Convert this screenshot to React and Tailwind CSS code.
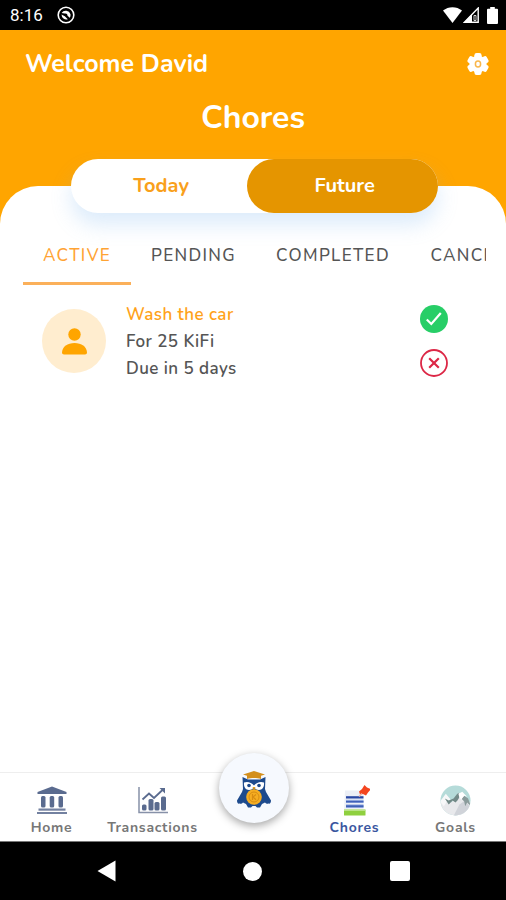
import { useState } from 'react';

const TABS = [
  { label: 'ACTIVE', width: 'w-[108px]' },
  { label: 'PENDING', width: 'w-[125px]' },
  { label: 'COMPLETED', width: 'w-[154px]' },
  { label: 'CANCELLED', width: 'w-[152px]' },
];

// ─── Device chrome ───────────────────────────────────────────────────────────

function StatusBar() {
  return (
    <div className="flex h-[30px] shrink-0 items-center bg-black pr-2 pl-2.5 text-white">
      <span className="font-['Roboto',sans-serif] text-[17px] leading-5">8:16</span>
      <svg className="ml-3.5 size-[18px]" viewBox="0 0 18 18" fill="none" aria-hidden="true">
        <circle cx="9" cy="9" r="7.800" stroke="#fff" strokeWidth="1.600" />
        <path d="M4.600 7A5 5 0 0 1 13.500 8.200c.2 1.600-.2 2.700-.9 3.600L10.400 9.600c.2-1.600-1.200-2.600-2.600-2z" fill="#fff" />
        <path d="M4.500 8.500l3.300 1.700 3 3A4.900 4.900 0 0 1 4.500 8.500z" fill="#fff" />
      </svg>
      <div className="ml-auto flex items-center">
        <svg className="h-4 w-[19px]" viewBox="0 0 19 16" fill="#fff" aria-hidden="true">
          <path d="M0 3.600C5.400-1 13.600-1 19 3.600L9.500 16z" />
        </svg>
        <svg className="ml-px h-4 w-4" viewBox="0 0 16 16" aria-hidden="true">
          <path d="M15.200 1v14.200H1.400z" fill="none" stroke="#fff" strokeWidth="1.400" />
          <path d="M9 7v9H.4z" fill="#fff" />
          <path d="M11 8.500h2v5h-2z" fill="none" stroke="#fff" strokeWidth=".8" />
        </svg>
        <svg className="ml-2 h-[17px] w-[11px]" viewBox="0 0 11 17" fill="#fff" aria-hidden="true">
          <path d="M3.200 0h4.600v1.700H10a1 1 0 0 1 1 1V16a1 1 0 0 1-1 1H1a1 1 0 0 1-1-1V2.700a1 1 0 0 1 1-1h2.200z" />
        </svg>
      </div>
    </div>
  );
}

function SystemNav() {
  return (
    <div className="grid h-[59px] shrink-0 grid-cols-3 place-items-center border-t border-[#777] bg-black px-[33px]">
      <button type="button" aria-label="Back">
        <svg className="h-[22px] w-[19px]" viewBox="0 0 19 22" fill="#fff">
          <path d="M18.500.5v21L.5 11z" />
        </svg>
      </button>
      <button type="button" aria-label="Home screen" className="size-[19px] rounded-full bg-white" />
      <button type="button" aria-label="Recent apps" className="size-5 rounded-xs bg-white" />
    </div>
  );
}

// ─── Icons ───────────────────────────────────────────────────────────────────

function GearIcon() {
  return (
    <svg className="size-[22px]" viewBox="0 0 22 22" aria-hidden="true">
      <g fill="#fff">
        <circle cx="11" cy="11" r="8.600" />
        <rect x="7.400" y="0" width="7.200" height="22" rx="2.200" />
        <rect x="7.400" y="0" width="7.200" height="22" rx="2.200" transform="rotate(60 11 11)" />
        <rect x="7.400" y="0" width="7.200" height="22" rx="2.200" transform="rotate(120 11 11)" />
      </g>
      <ellipse cx="11" cy="11" rx="2.600" ry="3" fill="none" stroke="#f9b64a" strokeWidth="1.500" />
    </svg>
  );
}

function PersonIcon() {
  return (
    <svg className="h-[27px] w-[25px]" viewBox="0 0 25 27" fill="#ffa500" aria-hidden="true">
      <circle cx="12.500" cy="6.500" r="6.200" />
      <path d="M0 24.500C.4 18.500 5.500 15 12.500 15S24.600 18.500 25 24.500c0 1.300-.8 2-2 2H2c-1.200 0-2-.7-2-2z" />
    </svg>
  );
}

function BankIcon() {
  return (
    <svg className="size-[30px]" viewBox="0 0 30 30" fill="#5a6b8f" aria-hidden="true">
      <path d="M15 .5 29.500 6v2H.5V6z" />
      <rect x="4" y="10" width="4.500" height="11.500" rx="1.500" />
      <rect x="12.700" y="10" width="4.500" height="11.500" rx="1.500" />
      <rect x="21.500" y="10" width="4.500" height="11.500" rx="1.500" />
      <rect x="1.500" y="22.500" width="27" height="2.200" opacity=".85" />
      <rect x="0" y="26" width="30" height="2" opacity=".85" />
    </svg>
  );
}

function ChartIcon() {
  return (
    <svg className="size-[30px]" viewBox="0 0 30 30" fill="none" aria-hidden="true">
      <path d="M1 1v25.500h29" stroke="#8791a8" strokeWidth="1.500" />
      <path d="m4.500 13.500 6.500-6 5 4.500L25 3.500" stroke="#5a6b8f" strokeWidth="1.800" />
      <path d="M21.500 2h5.500v5.500z" fill="#5a6b8f" />
      <g fill="#5a6b8f">
        <rect x="4" y="18.500" width="4.500" height="6" rx="1.500" />
        <rect x="10.500" y="13" width="5" height="11.500" rx="1.500" />
        <rect x="16.500" y="16" width="5" height="8.500" rx="1.500" />
        <rect x="23" y="10.500" width="5" height="14" rx="1.500" />
      </g>
    </svg>
  );
}

function ChoresIcon() {
  return (
    <svg className="h-[31px] w-[30px]" viewBox="0 0 30 31" aria-hidden="true">
      <path d="M5 5.500h18.500V26H4z" fill="#eceff6" />
      <path d="M4 25h21.500v5a.5.500 0 0 1-.5.500H4.500A.5.500 0 0 1 4 30z" fill="#8fd03f" />
      <path d="M4 24h21.500v1.800H4z" fill="#c6e79c" />
      <path d="M6 14.700h17.500v3.300H6zM6 19.300h17.500v3.700H6z" fill="#a9bce8" />
      <path d="M6 11.200h17.500v2.300H6z" fill="#2947a4" />
      <path d="M6 15.700h17.500v1.800H6zM6 20.300h17.500v2H6z" fill="#3f60b8" />
      <path d="M26.500 0 29 2.500 33 4l-3 3.500-2 3-3-1.500-3 .5-1-3L24 4z" fill="#f4451f" transform="translate(-2 0)" />
      <path d="m22 8.500-3 3" stroke="#e9b4a9" strokeWidth="1.200" />
    </svg>
  );
}

function GoalsIcon() {
  return (
    <svg className="size-[31px]" viewBox="0 0 32 32" aria-hidden="true">
      <defs>
        <clipPath id="goals-disc">
          <circle cx="16" cy="16" r="15.500" />
        </clipPath>
      </defs>
      <g clipPath="url(#goals-disc)">
        <rect width="32" height="32" fill="#b5dbd9" />
        <path d="m0 19 6-8 6 7 7-10 7 4 6 7v13H8L0 22z" fill="#e8e9ec" />
        <path d="m14 32 6-12 6-4 6 8-10 8z" fill="#d0d3d9" />
        <path d="m0 17 6-8 5 6-4 2-3 5z" fill="#f7f8f9" />
        <path d="m5 14 4 2 5-2 3-4 2-2 2 3-3 5-2 2-3-2-4 4z" fill="#728a88" />
        <path d="m22 14 3-3 4 3 3 8-4-4-2 4-1-5z" fill="#8a9b9b" />
        <path d="m19 9 4-2 5 5-3-1-3 4-2-2z" fill="#fff" />
      </g>
    </svg>
  );
}

function OwlIcon() {
  return (
    <svg className="h-[37px] w-[34px]" viewBox="0 0 34 37" aria-hidden="true">
      <path d="M5.500 6 11 8.500h12L28.500 6 28 18l1 3 5 8.500c0 2.500-1 3.500-2.500 3-1.500.6-2.500.3-3.500-1l-3 1.500-2 3.500h-3l-1.500-1.500h-3L14 36.500h-3L9 33l-3-1.500c-1 1.300-2 1.600-3.500 1-1.500.5-2.500-.5-2.500-3L5 21l1-3z" fill="#1d4a8d" />
      <path d="M7 11.500c3.500-1.500 7.500 0 10 3 2.500-3 6.500-4.500 10-3 .5 4.500-1.500 7.500-5 7.500-2.200 0-4-1.200-5-3-1 1.800-2.800 3-5 3-3.500 0-5.500-3-5-7.500z" fill="#fff" />
      <circle cx="12" cy="14.500" r="1.800" fill="#1d4a8d" />
      <circle cx="22" cy="14.500" r="1.800" fill="#1d4a8d" />
      <path d="M15.500 16h3L17 19z" fill="#e9a01b" />
      <path d="M17 0 28 3.500l-4 1.300V8c-4-1.400-10-1.400-14 0V4.800L6 3.500z" fill="#d38f1d" />
      <circle cx="17" cy="26" r="7.800" fill="#f5ad22" />
      <circle cx="17" cy="26" r="5" fill="none" stroke="#d88d12" strokeWidth="1" />
      <path d="M15.500 23v6M19 23.500 16 26l3 2.800" fill="none" stroke="#d88d12" strokeWidth="1.200" />
    </svg>
  );
}

// ─── Screen parts ────────────────────────────────────────────────────────────

function DayToggle({ value, onChange }) {
  return (
    <div className="relative z-10 mr-[68px] ml-[71px] flex h-[54px] rounded-full bg-white text-xl font-bold shadow-[0_12px_20px_rgba(120,180,240,0.25)]">
      <button
        type="button"
        onClick={() => onChange('today')}
        className={`flex-1 rounded-full pl-1 ${value === 'today' ? 'bg-[#e59500] text-white' : 'text-[#f9a01b]'}`}
      >
        Today
      </button>
      <button
        type="button"
        onClick={() => onChange('future')}
        className={`w-[52%] rounded-full pl-1 ${value === 'future' ? 'bg-[#e59500] text-white' : 'text-[#f9a01b]'}`}
      >
        Future
      </button>
    </div>
  );
}

function ChoreRow({ title, reward, due }) {
  return (
    <li className="flex pr-[58px] pl-[42px]">
      <div className="mt-2 flex size-16 shrink-0 items-center justify-center rounded-full bg-[#ffedcf]">
        <PersonIcon />
      </div>
      <div className="ml-5 flex-1 text-[17px] leading-[27px] font-semibold tracking-wide text-[#555]">
        <h2 className="text-[#ffa21a]">{title}</h2>
        <p>{reward}</p>
        <p>{due}</p>
      </div>
      <div className="mt-1 flex flex-col gap-4">
        <button type="button" aria-label="Approve chore" className="size-7">
          <svg viewBox="0 0 28 28" fill="none">
            <circle cx="14" cy="14" r="14" fill="#27ce67" />
            <path d="m6.800 14.500 4.500 4.500 9.500-11" stroke="#fff" strokeWidth="2.200" />
          </svg>
        </button>
        <button type="button" aria-label="Reject chore" className="size-7">
          <svg viewBox="0 0 28 28" fill="none" stroke="#dc2746">
            <circle cx="14" cy="14" r="13" strokeWidth="1.800" />
            <path d="m9.200 9.200 9.600 9.600m0-9.600-9.600 9.600" strokeWidth="2.200" />
          </svg>
        </button>
      </div>
    </li>
  );
}

function NavItem({ label, icon, active }) {
  return (
    <a
      href="#"
      aria-current={active ? 'page' : undefined}
      className={`flex flex-col items-center text-sm leading-4 font-bold tracking-wider ${active ? 'text-[#3a569f]' : 'text-[#777]'}`}
    >
      <span className="mt-3 mb-1 flex h-[31px] items-center">{icon}</span>
      {label}
    </a>
  );
}

function BottomNav() {
  return (
    <nav className="grid h-[69px] shrink-0 grid-cols-5 border-t border-[#eee] bg-white pl-px">
      <NavItem label="Home" icon={<BankIcon />} />
      <NavItem label="Transactions" icon={<ChartIcon />} />
      <a
        href="#"
        aria-label="Owl assistant"
        className="relative -mt-5 flex size-[70px] items-center justify-center justify-self-center rounded-full bg-[#f6f9fe] pt-0.5 shadow-[0_3px_9px_rgba(0,0,0,0.35)]"
      >
        <OwlIcon />
      </a>
      <NavItem label="Chores" icon={<ChoresIcon />} active />
      <NavItem label="Goals" icon={<GoalsIcon />} />
    </nav>
  );
}

export default function App() {
  const [day, setDay] = useState('future');
  const [tab, setTab] = useState('ACTIVE');

  return (
    <div className="flex min-h-screen flex-col bg-white font-['Nunito','Open_Sans',sans-serif]">
      <StatusBar />
      <main className="flex flex-1 flex-col bg-[#ffa500]">
        <header className="text-white">
          <div className="flex h-[68px] items-center justify-between pr-[17px] pl-[25px]">
            <p className="text-[25px] leading-8 font-bold">Welcome David</p>
            <button type="button" aria-label="Settings">
              <GearIcon />
            </button>
          </div>
          <h1 className="mb-[21px] text-center text-[32px] leading-10 font-bold">Chores</h1>
        </header>
        <DayToggle value={day} onChange={setDay} />
        <section className="-mt-[27px] flex-1 rounded-t-[38px] bg-white pt-10">
          <div role="tablist" className="mr-5 ml-[23px] flex overflow-hidden">
            {TABS.map((t) => (
              <button
                key={t.label}
                type="button"
                role="tab"
                aria-selected={tab === t.label}
                onClick={() => setTab(t.label)}
                className={`h-[59px] shrink-0 border-b-3 pt-1 text-center text-[17px] font-medium tracking-[0.08em] ${t.width} ${
                  tab === t.label ? 'border-[#fbb05a] text-[#ffa333]' : 'border-transparent text-[#555]'
                }`}
              >
                {t.label}
              </button>
            ))}
          </div>
          <ul className="mt-4">
            <ChoreRow title="Wash the car" reward="For 25 KiFi" due="Due in 5 days" />
          </ul>
        </section>
      </main>
      <BottomNav />
      <SystemNav />
    </div>
  );
}
